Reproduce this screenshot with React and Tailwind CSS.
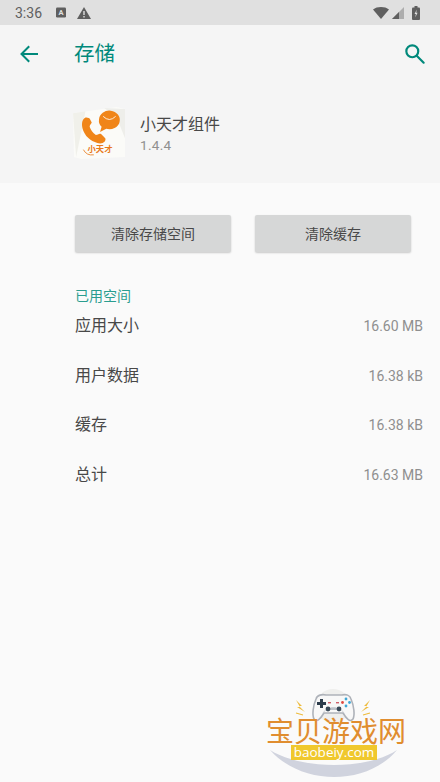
const CJK = { fontFamily: '"Roboto","Noto Sans CJK SC",sans-serif' };

function Row({ label, value }) {
  return (
    <div className="flex h-[49.5px] items-center justify-between pl-[75px] pr-[17px]">
      <span className="text-[16px] leading-none text-[#484848]">{label}</span>
      <span className="text-[14px] leading-none text-[#8f8f8f]">{value}</span>
    </div>
  );
}

function AppIcon() {
  return (
    <svg width="52" height="52" viewBox="0 0 50 50" className="shrink-0">
      <path d="M0 6 L42 0 L50 2 L50 48 L8 50 L1 48 Z" fill="#fbfbf8" />
      <path d="M30 1 L50 2 L50 30 L42 10 Z" fill="#eeeeea" />
      <path d="M0 6 L12 4 L3 48 Z" fill="#f0f0ea" />
      <path d="M12 10 C8 12 8 18 10 23 C13 30 19 34 26 35 C30 35 32 32 31 30 L27 26 C25 25 24 27 22 27 C19 25 17 22 16 19 C16 17 18 16 18 15 L16 11 C15 10 13 10 12 10 Z" fill="#f08519" />
      <path d="M25 12 a10 9 0 1 1 7 9 l-6 3 l1.5 -5 a8 8 0 0 1 -2.5 -7 Z" fill="#f08519" />
      <path d="M29 9 q6 6 12 0" stroke="#fff" strokeWidth="0.8" fill="none" />
      <text x="26" y="43" textAnchor="middle" fontSize="8" fontWeight="700" fill="#e8791a" style={{ fontFamily: '"Noto Sans CJK SC",sans-serif' }}>小天才</text>
      <path d="M10 41 q3 6 10 5" stroke="#e8791a" strokeWidth="0.8" fill="none" />
    </svg>
  );
}

function Watermark() {
  return (
    <div className="absolute left-[262px] top-[686px] h-[96px] w-[150px]">
      <svg width="150" height="96" viewBox="0 0 150 96" className="absolute left-0 top-0">
        <circle cx="71" cy="20" r="17" fill="#efefed" />
        <path d="M8 64 C40 100 105 100 135 64 C105 84 40 84 8 64 Z" fill="#d0d3de" />
        <path d="M54 13 C55 9 60 8 64 9 L80 9 C84 8 88 9 89 13 C92 20 93 29 91 33 C88 37 84 32 81 27 L62 27 C59 32 55 37 52 33 C50 29 51 20 54 13 Z" fill="#f8f8f8" stroke="#aeb2b9" strokeWidth="1.6" />
        <path d="M60 28 C65 19 78 19 83 28 L79 24 L64 24 Z" fill="#bcc0c7" />
        <path d="M58 13 h3 v3 h3 v3 h-3 v3 h-3 v-3 h-3 v-3 h3 Z" fill="#2d3d4c" />
        <circle cx="66" cy="23" r="2.4" fill="#3a4a58" />
        <circle cx="77" cy="23" r="2.4" fill="#3a4a58" />
        <circle cx="84" cy="13" r="1.4" fill="#3fa7d6" />
        <circle cx="84" cy="20" r="1.4" fill="#3fa7d6" />
        <circle cx="80.5" cy="16.5" r="1.4" fill="#e0493f" />
        <circle cx="87.5" cy="16.5" r="1.4" fill="#3fa7d6" />
        <rect x="66" y="16" width="3" height="1.4" fill="#d0606a" />
        <rect x="74" y="16" width="3" height="1.4" fill="#d0606a" />
        <path d="M34 14 L40 20 L37 20 L43 26 L35 21 L38 21 Z" fill="#eebc3c" />
        <path d="M108 14 L102 20 L105 20 L99 26 L107 21 L104 21 Z" fill="#eebc3c" />
        <path d="M34 27 L41 29 M108 27 L101 29" stroke="#eebc3c" strokeWidth="1.2" />
      </svg>
      <div className="absolute left-[4px] top-[31px] whitespace-nowrap text-[28px] leading-[27px] text-[#e08d2f]" style={{ fontFamily: '"Noto Sans CJK SC",sans-serif' }}>宝贝游戏网</div>
      <div className="absolute left-[29px] top-[59px] flex h-[15px] w-[86px] items-center justify-center bg-[#f0c82d] text-[13.5px] leading-none text-white" style={{ fontFamily: '"Open Sans",sans-serif' }}>baobeiy.com</div>
    </div>
  );
}

export default function App() {
  return (
    <div className="relative h-[782px] w-[440px] overflow-hidden bg-[#fafafa]" style={CJK}>
      <div className="flex h-[25px] items-center bg-[#e0e0e0] pl-[15px] pr-[20px]">
        <span className="text-[14px] leading-none text-[#5f5f5f]">3:36</span>
        <svg width="11" height="11" viewBox="0 0 11 11" className="ml-[14px]">
          <rect width="10" height="10" y="0.5" rx="1.2" fill="#5f5f5f" />
          <text x="5" y="8" textAnchor="middle" fontSize="7.5" fontWeight="700" fill="#e0e0e0" style={{ fontFamily: '"Roboto",sans-serif' }}>A</text>
        </svg>
        <svg width="14" height="12" viewBox="0 0 14 12" className="ml-[10px]">
          <path d="M7 0 L14 12 L0 12 Z" fill="#5f5f5f" />
          <rect x="6.3" y="4" width="1.4" height="4" fill="#e0e0e0" />
          <rect x="6.3" y="9" width="1.4" height="1.5" fill="#e0e0e0" />
        </svg>
        <div className="flex-1" />
        <svg width="16" height="12" viewBox="0 0 16 12">
          <path d="M0 2.5 C4 -0.8 12 -0.8 16 2.5 L8 12 Z" fill="#5f5f5f" />
        </svg>
        <svg width="12" height="12" viewBox="0 0 12 12" className="ml-[3px]">
          <path d="M12 0 L12 12 L0 12 Z" fill="#adadad" />
          <path d="M7 5 L7 12 L0 12 Z" fill="#5f5f5f" />
        </svg>
        <svg width="8" height="14" viewBox="0 0 8 14" className="ml-[8px]">
          <rect x="2.5" y="0" width="3" height="2" fill="#5f5f5f" />
          <rect x="0" y="1.5" width="8" height="12.5" rx="1" fill="#5f5f5f" />
          <path d="M4.8 3.5 L2.5 8 L3.9 8 L3.2 11.5 L5.6 6.8 L4.2 6.8 Z" fill="#e0e0e0" />
        </svg>
      </div>

      <div className="h-[158px] bg-[#f5f5f5]">
        <div className="flex h-[58px] items-center pl-[17px] pr-[12px]">
          <svg width="24" height="24" viewBox="0 0 24 24" fill="none" stroke="#00897b" strokeWidth="2" strokeLinecap="square">
            <path d="M20 12 H5 M11.5 5 L4.5 12 L11.5 19" />
          </svg>
          <span className="ml-[33px] text-[20.5px] leading-none text-[#00897b]">存储</span>
          <div className="flex-1" />
          <svg width="26" height="26" viewBox="0 0 24 24" fill="none" stroke="#00897b" strokeWidth="2">
            <circle cx="9.5" cy="9.5" r="5.5" />
            <path d="M13.6 13.6 L20 20" strokeLinecap="round" />
          </svg>
        </div>
        <div className="mt-[24px] flex items-center pl-[73px]">
          <AppIcon />
          <div className="ml-[15px] flex flex-col">
            <span className="text-[16px] leading-[22px] text-[#484848]">小天才组件</span>
            <span className="mt-[1px] text-[13.5px] leading-[16px] tracking-[0.3px] text-[#8f8f8f]">1.4.4</span>
          </div>
        </div>
      </div>

      <div className="flex gap-[24px] pl-[75px] pt-[32px]">
        <div className="flex h-[37px] w-[156px] items-center justify-center rounded-[2px] bg-[#d6d7d7] text-[14px] leading-none text-[#484848] shadow-[0_1px_2px_rgba(0,0,0,0.2)]">清除存储空间</div>
        <div className="flex h-[37px] w-[156px] items-center justify-center rounded-[2px] bg-[#d6d7d7] text-[14px] leading-none text-[#484848] shadow-[0_1px_2px_rgba(0,0,0,0.2)]">清除缓存</div>
      </div>

      <div className="pl-[75px] pt-[36px] text-[14px] leading-[16px] text-[#2a9d8f]">已用空间</div>

      <div className="-mt-[2.5px]">
        <Row label="应用大小" value="16.60 MB" />
        <Row label="用户数据" value="16.38 kB" />
        <Row label="缓存" value="16.38 kB" />
        <Row label="总计" value="16.63 MB" />
      </div>

      <Watermark />
    </div>
  );
}
